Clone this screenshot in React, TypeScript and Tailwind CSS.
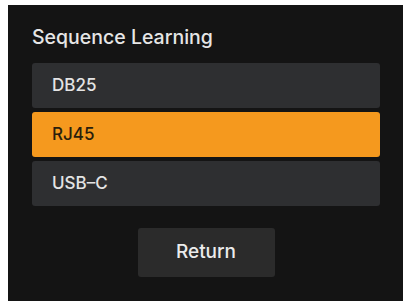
import { useState } from 'react'

const options = ['DB25', 'RJ45', 'USB–C']

export default function App() {
  const [selected, setSelected] = useState('RJ45')

  return (
    <div className="w-[407px] h-[306px] bg-white pt-[5px] pl-[8px]" style={{ fontFamily: 'Inter, "Liberation Sans", sans-serif' }}>
      <div className="w-[395px] h-[296px] bg-[#141414] pt-[20px] pl-[24px] pr-[23px] flex flex-col">
        <h1 className="text-[19.5px] leading-[24px] font-medium text-[#e6e6e6] mb-[14px]">Sequence Learning</h1>

        <div className="flex flex-col gap-[4px]">
          {options.map((opt) => (
            <button
              key={opt}
              onClick={() => setSelected(opt)}
              className={
                opt === selected
                  ? 'h-[45px] rounded-[3px] bg-[#f5991e] text-[#2a1e0c] text-left pl-[20px] text-[17px] font-medium'
                  : 'h-[45px] rounded-[3px] bg-[#2e2f31] text-[#e4e4e4] text-left pl-[20px] text-[17px] font-medium'
              }
            >
              {opt}
            </button>
          ))}
        </div>

        <div className="flex justify-center mt-[22px]">
          <button className="w-[137px] h-[49px] rounded-[3px] bg-[#2b2b2b] text-[#ececec] text-[19px] font-medium">
            Return
          </button>
        </div>
      </div>
    </div>
  )
}
